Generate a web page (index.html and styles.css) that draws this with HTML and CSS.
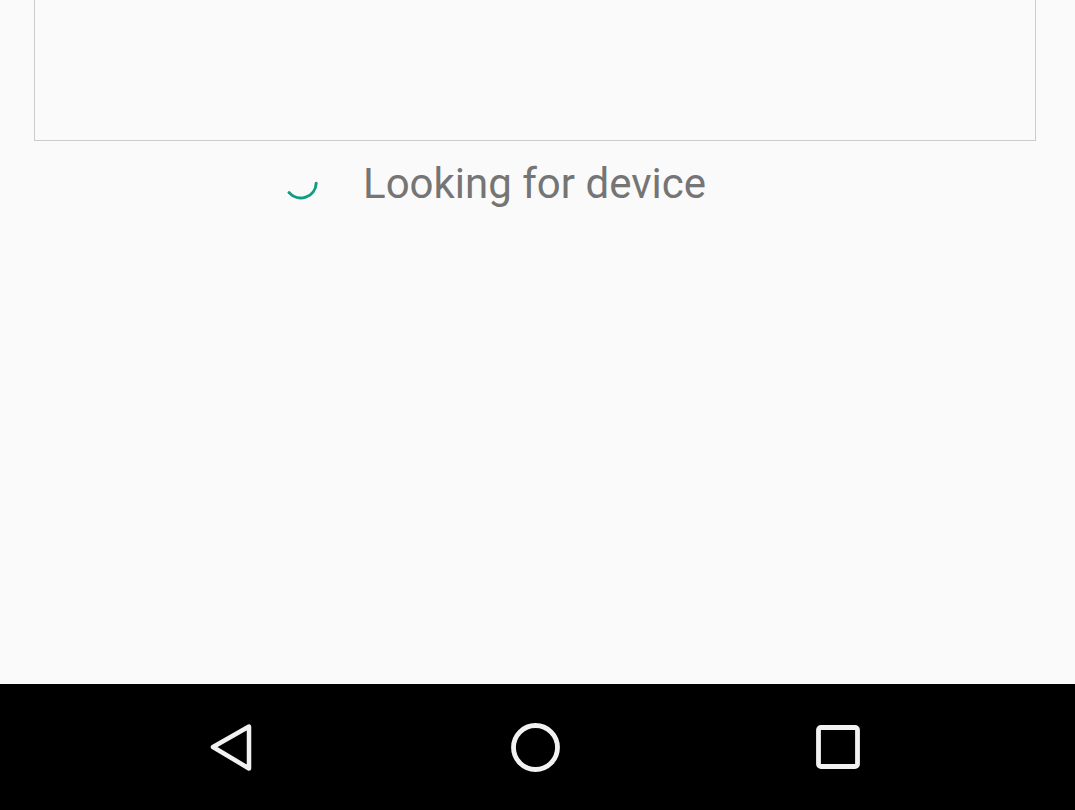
FILE: index.html
```html
<!DOCTYPE html>
<html>
<head>
<meta charset="utf-8">
<link rel="stylesheet" href="styles.css">
</head>
<body>
<div class="screen">
  <main class="content">
    <div class="card"></div>
    <div class="status">
      <div class="spin-cell">
        <svg class="spinner" width="40" height="40" viewBox="0 0 40 40">
          <path d="M8 28.6 A15.5 15.5 0 0 0 35.2 19.2" fill="none" stroke="#139c82" stroke-width="3" stroke-linecap="round"/>
        </svg>
      </div>
      <div class="label">Looking for device</div>
      <div></div>
    </div>
  </main>
  <nav class="navbar">
    <div class="nav-btn">
      <svg width="60" height="60" viewBox="0 0 60 60">
        <path d="M11 30 L47 9.5 L47 51.5 Z" fill="none" stroke="#f2f2f2" stroke-width="4.5" stroke-linejoin="round"/>
      </svg>
    </div>
    <div class="nav-btn">
      <svg width="60" height="60" viewBox="0 0 60 60">
        <circle cx="30.5" cy="30.5" r="22" fill="none" stroke="#f2f2f2" stroke-width="4.8"/>
      </svg>
    </div>
    <div class="nav-btn">
      <svg width="60" height="60" viewBox="0 0 60 60">
        <rect x="10.5" y="10.5" width="39" height="39" rx="2.5" fill="none" stroke="#f2f2f2" stroke-width="4.8"/>
      </svg>
    </div>
  </nav>
</div>
</body>
</html>
```

FILE: styles.css
```css
html, body {
  margin: 0;
  padding: 0;
  background: #fafafa;
}
.screen {
  width: 1075px;
  height: 810px;
  display: flex;
  flex-direction: column;
  overflow: hidden;
}
.content {
  flex: 1;
  display: flex;
  flex-direction: column;
  background: #fafafa;
}
.card {
  margin: 0 39px 0 34px;
  height: 140px;
  border: 1px solid #cbcbcb;
  border-top: none;
  background: #fafafa;
}
.status {
  margin-top: 19px;
  padding-right: 6px;
  display: grid;
  grid-template-columns: 1fr auto 1fr;
  align-items: center;
  height: 48px;
}
.spin-cell {
  display: flex;
  justify-content: flex-end;
  padding-right: 42px;
}
.spinner {
  display: block;
}
.label {
  font-family: Roboto, "Noto Sans", sans-serif;
  font-size: 42px;
  line-height: 48px;
  color: #757575;
  white-space: nowrap;
}
.navbar {
  height: 126px;
  background: #000;
  display: flex;
  justify-content: center;
  align-items: center;
  gap: 243px;
  padding-right: 5px;
}
.nav-btn {
  width: 60px;
  height: 60px;
}
.nav-btn svg {
  display: block;
}
```
